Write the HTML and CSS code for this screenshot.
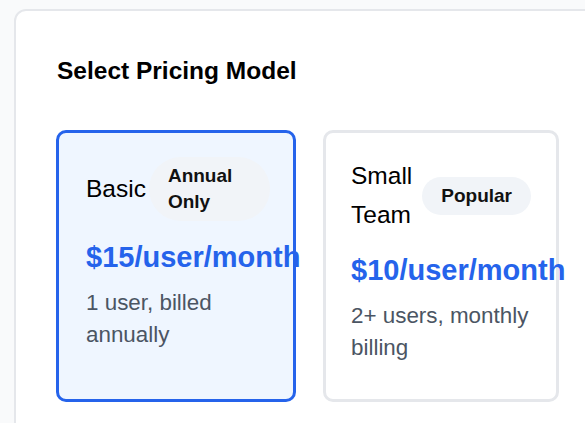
FILE: index.html
```html
<!DOCTYPE html>
<html lang="en">
<head>
<meta charset="utf-8">
<title>Select Pricing Model</title>
<link rel="stylesheet" href="styles.css">
</head>
<body>
<div class="page">
  <section class="panel">
    <h2 class="panel-title">Select Pricing Model</h2>
    <div class="plans">
      <div class="plan plan-selected">
        <div class="plan-head">
          <span class="plan-name">Basic</span>
          <span class="badge">Annual Only</span>
        </div>
        <div class="price">$15/user/month</div>
        <p class="desc">1 user, billed annually</p>
      </div>
      <div class="plan">
        <div class="plan-head">
          <span class="plan-name">Small Team</span>
          <span class="badge">Popular</span>
        </div>
        <div class="price">$10/user/month</div>
        <p class="desc">2+ users, monthly billing</p>
      </div>
    </div>
  </section>
</div>
</body>
</html>
```

FILE: styles.css
```css
html, body {
  margin: 0;
  padding: 0;
  overflow: hidden;
  background: #f9fafb;
  font-family: "Liberation Sans", Arial, sans-serif;
  line-height: 1.6;
  color: #000;
}

.page {
  padding: 9px 0 0 14px;
}

.panel {
  width: 760px;
  min-height: 460px;
  background: #ffffff;
  border: 2px solid #e5e7eb;
  border-radius: 12px;
  padding: 40px;
  box-sizing: border-box;
}

.panel-title {
  margin: 0 0 40px 1px;
  font-size: 24.5px;
  font-weight: 700;
  line-height: 1.6;
  color: #000;
}

.plans {
  display: grid;
  grid-template-columns: 240px 236px;
  column-gap: 27px;
  align-items: stretch;
}

.plan {
  border: 3px solid #e5e7eb;
  border-radius: 10px;
  background: #ffffff;
  padding: 24px 25px 35px 25px;
  box-sizing: border-box;
  min-width: 0;
}

.plan-selected {
  border-color: #2563eb;
  background: #eff6ff;
  padding-left: 27px;
  padding-right: 23px;
}

.plan-head {
  display: flex;
  align-items: center;
  gap: 3px;
}

.plan-name {
  font-size: 24.5px;
  line-height: 38.5px;
  color: #000;
}

.badge {
  background: #f1f4f8;
  border-radius: 9999px;
  padding: 6px 19px;
  font-size: 19px;
  font-weight: 700;
  line-height: 26px;
  color: #111;
}

.price {
  margin-top: 16px;
  font-size: 29px;
  font-weight: 700;
  line-height: 40px;
  color: #2563eb;
  white-space: nowrap;
}

.desc {
  margin: 10px 0 0 0;
  font-size: 22.4px;
  line-height: 32px;
  color: #4b5563;
}
```
